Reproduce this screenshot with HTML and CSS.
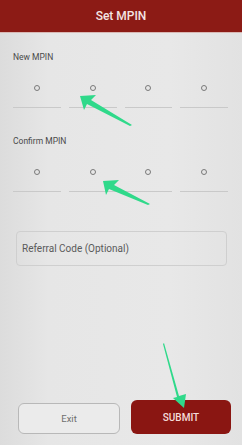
FILE: index.html
```html
<!DOCTYPE html>
<html>
<head>
<meta charset="utf-8">
<link rel="stylesheet" href="styles.css">
</head>
<body>
<div class="screen">
  <header class="topbar">Set MPIN</header>
  <main class="content">
    <section class="pin-group">
      <div class="label">New MPIN</div>
      <div class="pin-row">
        <div class="pin-cell"><span class="dot"></span></div>
        <div class="pin-cell"><span class="dot"></span></div>
        <div class="pin-cell"><span class="dot"></span></div>
        <div class="pin-cell"><span class="dot"></span></div>
      </div>
    </section>
    <section class="pin-group confirm">
      <div class="label">Confirm MPIN</div>
      <div class="pin-row">
        <div class="pin-cell"><span class="dot"></span></div>
        <div class="pin-cell"><span class="dot"></span></div>
        <div class="pin-cell"><span class="dot"></span></div>
        <div class="pin-cell"><span class="dot"></span></div>
      </div>
    </section>
    <div class="referral">Referral Code (Optional)</div>
    <div class="spacer"></div>
    <div class="actions">
      <button class="btn exit">Exit</button>
      <button class="btn submit">SUBMIT</button>
    </div>
  </main>
  <svg class="arrows" width="242" height="445" viewBox="0 0 242 445">
    <polygon fill="#2fd98a" points="80,96 96,95 91,100 132,125 130,126 87,104 84,110"/>
    <polygon fill="#2fd98a" points="103,181 119,180 114,185 150,204 148,205 109,189 106,195"/>
    <polygon fill="#2fd98a" points="164,343 179,396 186,394 184,408 173,398 177,397 163,344"/>
  </svg>
</div>
</body>
</html>
```
FILE: styles.css
```css
html, body {
  margin: 0;
  padding: 0;
}
body {
  font-family: Roboto, "Noto Sans", "Liberation Sans", sans-serif;
  background: #e3e3e3;
}
.screen {
  position: relative;
  width: 242px;
  height: 445px;
  display: flex;
  flex-direction: column;
  overflow: hidden;
}
.topbar {
  height: 33px;
  background: #8c1b15;
  color: #f3e6e4;
  font-size: 12px;
  font-weight: 500;
  display: flex;
  align-items: center;
  justify-content: center;
  border-bottom: 1px solid #d9b8b4;
  box-sizing: border-box;
}
.content {
  flex: 1;
  display: flex;
  flex-direction: column;
  padding: 0 14px 12px 13px;
  background: linear-gradient(90deg, #dcdcdc 0%, #e6e6e6 20%, #e8e8e8 70%, #e2e2e2 100%);
}
.pin-group {
  padding-top: 19px;
}
.pin-group.confirm {
  padding-top: 28px;
}
.label {
  font-size: 8.5px;
  color: #4a4a4a;
  line-height: 10px;
}
.pin-row {
  display: grid;
  grid-template-columns: repeat(4, 1fr);
  column-gap: 8px;
  margin-top: 15px;
}
.pin-cell {
  height: 31px;
  border-bottom: 1px solid #c9c9c9;
  display: flex;
  justify-content: center;
  padding-top: 8px;
  box-sizing: border-box;
}
.dot {
  width: 4px;
  height: 4px;
  border: 1.2px solid #7a7a7a;
  border-radius: 50%;
}
.referral {
  margin: 39px 0 0 3px;
  height: 35px;
  width: 211px;
  box-sizing: border-box;
  border: 1px solid #cfcfcf;
  border-radius: 4px;
  display: flex;
  align-items: center;
  padding-left: 5px;
  font-size: 10px;
  color: #5a5a5a;
}
.spacer {
  flex: 1;
}
.actions {
  display: flex;
  align-items: flex-end;
  gap: 11px;
  padding: 0 0 0 5px;
  margin-bottom: -1px;
}
.btn {
  border-radius: 6px;
  font-family: Roboto, "Noto Sans", "Liberation Sans", sans-serif;
  padding: 0;
}
.exit {
  background: #ebebeb;
  border: 1px solid #b8b8b8;
  color: #6f6f6f;
  font-size: 9.5px;
  height: 31px;
  flex: 0 0 102px;
}
.submit {
  background: #8a1612;
  border: none;
  color: #f4dcda;
  font-size: 10px;
  font-weight: 500;
  flex: 0 0 100px;
  height: 34px;
}
.arrows {
  position: absolute;
  left: 0;
  top: 0;
  pointer-events: none;
}
```
